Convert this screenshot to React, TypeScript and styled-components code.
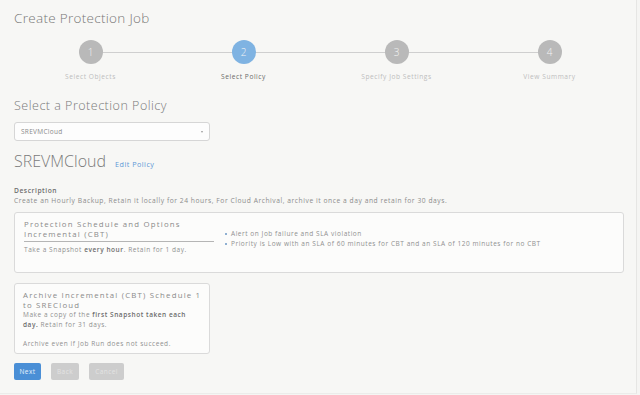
import React from "react";
import styled, { createGlobalStyle } from "styled-components";

const GlobalStyle = createGlobalStyle`
    html, body {
        margin: 0;
        padding: 0;
        background: #f5f5f3;
    }
    body {
        font-family: "Open Sans", "Liberation Sans", sans-serif;
        color: #888;
    }
`

const Page = styled.div`
    width: 637px;
    height: 394px;
    box-sizing: border-box;
    border-right: 1px solid #e6e6e4;
    border-bottom: 1px solid #ececea;
    padding: 8px 14px 0 14px;
    background: #f7f7f5;
    overflow: hidden;
`

const Title = styled.h1`
    margin: 0;
    font-size: 13.5px;
    font-weight: 300;
    color: #777;
    letter-spacing: 0.3px;
    line-height: 20px;
`

const Stepper = styled.div`
    display: grid;
    grid-template-columns: repeat(4, 1fr);
    width: 612px;
    margin-top: 12px;
`

const Step = styled.div<{ $first?: boolean; $last?: boolean }>`
    display: flex;
    flex-direction: column;
    align-items: center;
    position: relative;

    &::before {
        content: "";
        position: absolute;
        top: 12px;
        height: 1px;
        background: #cfcfcf;
        left: ${p => (p.$first ? "50%" : "0")};
        right: ${p => (p.$last ? "50%" : "0")};
    }
`

const Circle = styled.div<{ $active?: boolean }>`
    width: 24px;
    height: 24px;
    border-radius: 50%;
    background: ${p => (p.$active ? "#7fb3e2" : "#b9b9b9")};
    color: #f4f4f4;
    font-size: 10px;
    font-weight: 300;
    display: flex;
    align-items: center;
    justify-content: center;
    position: relative;
    z-index: 1;
`

const StepLabel = styled.div<{ $active?: boolean }>`
    margin-top: 8px;
    font-size: 6.6px;
    color: ${p => (p.$active ? "#6a6a6a" : "#bdbdbd")};
    letter-spacing: 0.55px;
`

const SectionTitle = styled.h2`
    margin: 17px 0 0 0;
    font-size: 12.5px;
    font-weight: 300;
    color: #7a7a7a;
    letter-spacing: 0.5px;
    line-height: 16px;
`

const Select = styled.div`
    width: 196px;
    height: 19px;
    box-sizing: border-box;
    margin-top: 8px;
    border: 1px solid #d6d6d6;
    border-radius: 3px;
    background: #fdfdfd;
    display: flex;
    align-items: center;
    justify-content: space-between;
    padding: 0 6px;
    font-size: 6.5px;
    letter-spacing: 0.3px;
    color: #8a8a8a;
`

const Caret = styled.span`
    width: 0;
    height: 0;
    border-left: 1.5px solid transparent;
    border-right: 1.5px solid transparent;
    border-top: 2px solid #999;
`

const PolicyHeader = styled.div`
    display: flex;
    align-items: baseline;
    gap: 9px;
    margin-top: 9px;
`

const PolicyName = styled.div`
    font-size: 16px;
    font-weight: 300;
    color: #7a7a7a;
    line-height: 22px;
`

const EditLink = styled.a`
    font-size: 7.2px;
    letter-spacing: 0.5px;
    color: #5d98d6;
    text-decoration: none;
`

const Description = styled.div`
    margin-top: 14px;
    font-size: 6.7px;
    line-height: 9.5px;
    letter-spacing: 0.55px;
    color: #8c8c8c;
`

const DescLabel = styled.div`
    font-weight: 600;
    color: #6e6e6e;
`

const Card = styled.div<{ $width: string }>`
    width: ${p => p.$width};
    box-sizing: border-box;
    border: 1px solid #dadada;
    border-radius: 3px;
    background: #fcfcfb;
`

const ScheduleCard = styled(Card)`
    margin-top: 7px;
    height: 61px;
    display: flex;
    padding: 6px 9px;
`

const ScheduleLeft = styled.div`
    width: 190px;
`

const CardTitle = styled.div`
    font-size: 7.8px;
    line-height: 10px;
    color: #8a8a8a;
    letter-spacing: 1.2px;
`

const Rule = styled.div`
    height: 1px;
    background: #b5b5b5;
    margin: 2px 0 3px;
`

const CardText = styled.div<{ $inset?: number }>`
    font-size: 6.5px;
    line-height: 10px;
    letter-spacing: 0.55px;
    color: #909090;
    padding-right: ${p => p.$inset ?? 0}px;

    b {
        font-weight: 600;
        color: #6c6c6c;
    }
`

const Bullets = styled.ul`
    margin: 10px 0 0 11px;
    padding: 0;
    list-style: none;
    font-size: 6.5px;
    line-height: 10px;
    letter-spacing: 0.55px;
    color: #909090;

    li::before {
        content: "";
        display: inline-block;
        width: 2px;
        height: 2px;
        background: #8fb0d2;
        vertical-align: middle;
        margin-right: 4px;
    }
`

const ArchiveCard = styled(Card)`
    margin-top: 10px;
    height: 71px;
    padding: 6px 4px 6px 8px;
`

const Spacer = styled.div`
    height: 9px;
`

const Buttons = styled.div`
    display: flex;
    gap: 10px;
    margin-top: 9px;
`

const Button = styled.button<{ $primary?: boolean; $w: number }>`
    width: ${p => p.$w}px;
    height: 17px;
    border: none;
    border-radius: 2px;
    padding: 0;
    font-family: inherit;
    font-size: 6.5px;
    letter-spacing: 0.4px;
    color: ${p => (p.$primary ? "#e6f0fb" : "#e3e3e3")};
    background: ${p => (p.$primary ? "#4a8fd6" : "#cdcdcd")};
`

const steps = ["Select Objects", "Select Policy", "Specify Job Settings", "View Summary"];

export default function App() {
    return (
        <>
            <GlobalStyle />
            <Page>
                <Title>Create Protection Job</Title>
                <Stepper>
                    {steps.map((s, i) => (
                        <Step key={s} $first={i === 0} $last={i === steps.length - 1}>
                            <Circle $active={i === 1}>{i + 1}</Circle>
                            <StepLabel $active={i === 1}>{s}</StepLabel>
                        </Step>
                    ))}
                </Stepper>

                <SectionTitle>Select a Protection Policy</SectionTitle>
                <Select>
                    <span>SREVMCloud</span>
                    <Caret />
                </Select>

                <PolicyHeader>
                    <PolicyName>SREVMCloud</PolicyName>
                    <EditLink href="#">Edit Policy</EditLink>
                </PolicyHeader>

                <Description>
                    <DescLabel>Description</DescLabel>
                    Create an Hourly Backup, Retain it locally for 24 hours, For Cloud Archival, archive it once a day and retain for 30 days.
                </Description>

                <ScheduleCard $width="610px">
                    <ScheduleLeft>
                        <CardTitle>Protection Schedule and Options</CardTitle>
                        <CardTitle>Incremental (CBT)</CardTitle>
                        <Rule />
                        <CardText>Take a Snapshot <b>every hour</b>. Retain for 1 day.</CardText>
                    </ScheduleLeft>
                    <Bullets>
                        <li>Alert on Job failure and SLA violation</li>
                        <li>Priority is Low with an SLA of 60 minutes for CBT and an SLA of 120 minutes for no CBT</li>
                    </Bullets>
                </ScheduleCard>

                <ArchiveCard $width="196px">
                    <CardTitle>Archive Incremental (CBT) Schedule 1 to SRECloud</CardTitle>
                    <CardText $inset={10}>
                        Make a copy of the <b>first Snapshot taken each day.</b> Retain for 31 days.
                    </CardText>
                    <Spacer />
                    <CardText>Archive even if Job Run does not succeed.</CardText>
                </ArchiveCard>

                <Buttons>
                    <Button $primary $w={27}>Next</Button>
                    <Button $w={28}>Back</Button>
                    <Button $w={35}>Cancel</Button>
                </Buttons>
            </Page>
        </>
    );
}
